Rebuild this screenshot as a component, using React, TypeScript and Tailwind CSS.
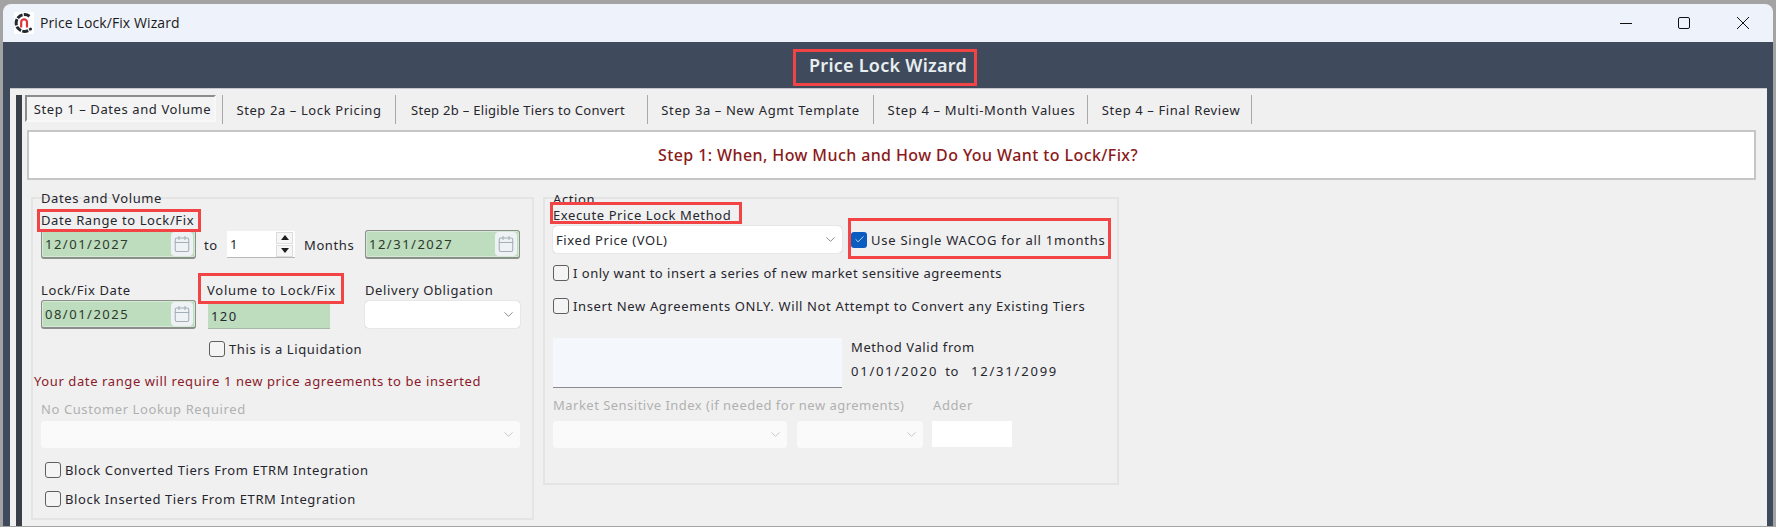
import React from "react";
import { Calendar, ChevronDown, Check } from "lucide-react";

const tabs = [
  { label: "Step 2a – Lock Pricing", cls: "w-[173px]" },
  { label: "Step 2b – Eligible Tiers to Convert", cls: "w-[252px] pr-[7px] tracking-[0.3px]" },
  { label: "Step 3a – New Agmt Template", cls: "w-[226px]" },
  { label: "Step 4 – Multi-Month Values", cls: "w-[214px] pl-[2px] tracking-[0.65px]" },
  { label: "Step 4 – Final Review", cls: "w-[164px] pl-[3px]" },
];

function Logo() {
  return (
    <svg width="20" height="22" viewBox="0 0 20 22" className="bg-white">
      <path d="M15.5 4.2A8.4 8.4 0 1 0 15.5 17.8" fill="none" stroke="#23272e" strokeWidth="3" strokeDasharray="6 1.2" />
      <path d="M7.2 15.5V10C7.2 6.6 13 6.6 13 10V15.5" fill="none" stroke="#e0303c" strokeWidth="2.2" />
      <circle cx="16.5" cy="17" r="1.5" fill="#23272e" />
    </svg>
  );
}

function DateBox({ value }: { value: string }) {
  return (
    <div className="flex h-[29px] w-[155px] items-center justify-between rounded-[3px] border border-[#8a8f8a] border-b-2 bg-[#bedcbe] pl-[3px] pr-[2px] tracking-[1.5px] text-[#2b3a2b] shadow-[inset_0_0_0_1px_#d6e8d6]">
      <span>{value}</span>
      <span className="flex h-[24px] w-[22px] items-center justify-center rounded-[4px] bg-[#eef2f4]">
        <Calendar size={18} strokeWidth={1.4} className="text-[#a3aeb6]" />
      </span>
    </div>
  );
}

function Select({ value, w, disabled }: { value?: string; w: string; disabled?: boolean }) {
  return (
    <div className={`flex h-[27px] items-center justify-between rounded-[4px] pl-[3px] pr-[4px] ${w} ${disabled ? "bg-[#fafafa] h-[26px]" : "bg-white shadow-[0_0_1px_#9a9a9a]"}`}>
      <span>{value}</span>
      <ChevronDown size={15} strokeWidth={1.2} className={disabled ? "text-[#b8b8b8]" : "text-[#666666]"} />
    </div>
  );
}

function SpinButton({ path }: { path: string }) {
  return (
    <span className="flex h-[12px] w-[17px] items-center justify-center border border-[#dcdcdc] bg-[#f6f6f6]">
      <svg width="8" height="5" viewBox="0 0 8 5">
        <path d={path} fill="#1c1c1c" />
      </svg>
    </span>
  );
}

function CheckBox({ label, className }: { label: string; className?: string }) {
  return (
    <div className={`flex h-[16px] items-center gap-[4px] ${className ?? ""}`}>
      <span className="h-[16px] w-[16px] shrink-0 rounded-[3px] border border-[#5f5f5f] bg-[#f4f4f4]" />
      <span>{label}</span>
    </div>
  );
}

function Annot({ cls }: { cls: string }) {
  return <div className={`pointer-events-none absolute border-[3px] border-[#f24444] ${cls}`} />;
}

export default function App() {
  return (
    <div className="relative flex h-[527px] w-[1776px] flex-col overflow-hidden bg-[#a3a3a3] pt-[4px] pb-px pl-[3px] pr-[3px] font-['Noto_Sans',sans-serif] text-[13px] leading-[18px] tracking-[0.6px] text-[#26262e]">
      <div className="flex h-[38px] shrink-0 items-center rounded-tl-[8px] rounded-tr-[8px] bg-[#eef2fb] pl-[11px]">
        <Logo />
        <span className="ml-[6px] font-['Open_Sans',sans-serif] text-[14px] tracking-[0.1px] text-[#1a1a1a]">Price Lock/Fix Wizard</span>
        <div className="ml-auto flex items-center pr-[24px] text-[#111111]">
          <svg width="12" height="12" viewBox="0 0 12 12"><path d="M0 6.5H12" stroke="currentColor" strokeWidth="1" /></svg>
          <svg width="12" height="12" viewBox="0 0 12 12" className="ml-[46px]"><rect x="0.5" y="0.5" width="11" height="11" rx="1.5" fill="none" stroke="currentColor" /></svg>
          <svg width="12" height="12" viewBox="0 0 12 12" className="ml-[47px]"><path d="M0 0L12 12M12 0L0 12" stroke="currentColor" strokeWidth="1" /></svg>
        </div>
      </div>

      <div className="flex min-h-0 flex-1 flex-col bg-[#3f4a5c]">
        <div className="flex h-[46px] shrink-0 items-center justify-center text-[18px] font-semibold tracking-[0.25px] text-[#e8eef0]">Price Lock Wizard</div>
        <div className="ml-[7px] mr-[6px] flex min-h-0 flex-1 border-t border-[#c4c8cc] bg-[#f0f0f0] pl-[6px]">
          <div className="mt-[6px] w-[6px] shrink-0 bg-[#3a3f47]" />
          <div className="min-w-0 flex-1">
            <div className="flex h-[41px] items-start pl-[3px] pt-[6px]">
              <div className="flex h-[27px] w-[191px] items-center justify-center border-2 border-[#8c8c8c] border-r-[#f8f8f8] border-b-[#f8f8f8] bg-[#f4f4f4] pl-[4px]">Step 1 – Dates and Volume</div>
              <div className="h-[29px] w-[7px] border-r border-[#a8a8a8]" />
              {tabs.map((t) => (
                <div key={t.label} className={`flex h-[29px] items-center justify-center border-r border-[#a8a8a8] ${t.cls}`}>{t.label}</div>
              ))}
            </div>
            <div className="ml-[5px] mr-[11px] flex h-[50px] items-center justify-center border-2 border-[#c6c6c6] bg-white pl-[13px] text-[16px] font-medium tracking-[0.4px] text-[#8b1a1a]">
              Step 1: When, How Much and How Do You Want to Lock/Fix?
            </div>

            <div className="flex items-start gap-[9px] pl-[9px] pt-[17px]">
              <div className="h-[323px] w-[503px] shrink-0 border-2 border-[#e4e4e4] pl-[8px]">
                <div className="-mt-[10px] h-[18px]">Dates and Volume</div>
                <div className="mt-[4px] h-[18px]">Date Range to Lock/Fix</div>
                <div className="mt-px flex h-[29px] items-center">
                  <DateBox value="12/01/2027" />
                  <span className="ml-[8px] w-[23px]">to</span>
                  <div className="flex h-[27px] w-[68px] items-center justify-between border-b border-[#b8b8b8] bg-white pl-[3px] pr-[2px]">
                    <span>1</span>
                    <span className="flex flex-col gap-px">
                      <SpinButton path="M4 0L8 5H0Z" />
                      <SpinButton path="M0 0H8L4 5Z" />
                    </span>
                  </div>
                  <span className="ml-[9px] w-[61px]">Months</span>
                  <DateBox value="12/31/2027" />
                </div>
                <div className="mt-[22px] flex h-[18px]">
                  <span className="w-[166px]">Lock/Fix Date</span>
                  <span className="w-[158px] tracking-[0.75px]">Volume to Lock/Fix</span>
                  <span>Delivery Obligation</span>
                </div>
                <div className="mt-px flex h-[29px] items-start">
                  <DateBox value="08/01/2025" />
                  <div className="ml-[12px] mt-[3px] flex h-[26px] w-[122px] items-center border-b border-[#a8b8a8] bg-[#bedcbe] pl-[3px] tracking-[1.4px]">120</div>
                  <div className="ml-[35px] mt-px">
                    <Select w="w-[155px]" />
                  </div>
                </div>
                <CheckBox label="This is a Liquidation" className="ml-[168px] mt-[12px]" />
                <div className="-ml-[7px] mt-[15px] h-[18px] text-[#8b1a2a]">Your date range will require 1 new price agreements to be inserted</div>
                <div className="mt-[10px] h-[18px] text-[#b0b0b0]">No Customer Lookup Required</div>
                <div className="mt-[3px]">
                  <Select w="w-[479px]" disabled />
                </div>
                <CheckBox label="Block Converted Tiers From ETRM Integration" className="ml-[4px] mt-[14px]" />
                <CheckBox label="Block Inserted Tiers From ETRM Integration" className="ml-[4px] mt-[13px]" />
              </div>

              <div className="h-[288px] w-[576px] shrink-0 border-2 border-[#e4e4e4] pl-[8px]">
                <div className="-mt-[9px] h-[16px]">Action</div>
                <div className="h-[18px]">Execute Price Lock Method</div>
                <div className="mt-[2px] flex h-[27px] items-center">
                  <Select value="Fixed Price (VOL)" w="w-[289px]" />
                  <div className="ml-[9px] flex items-center gap-[4px]">
                    <span className="flex h-[16px] w-[16px] items-center justify-center rounded-[3px] bg-[#0a5cc0]">
                      <Check size={11} strokeWidth={2} className="text-[#cfe0f5]" />
                    </span>
                    <span className="tracking-[0.75px]">Use Single WACOG for all 1months</span>
                  </div>
                </div>
                <CheckBox label="I only want to insert a series of new market sensitive agreements" className="mt-[12px] tracking-[0.5px]" />
                <CheckBox label="Insert New Agreements ONLY. Will Not Attempt to Convert any Existing Tiers" className="mt-[17px] tracking-[0.63px]" />
                <div className="mt-[24px] flex">
                  <div className="h-[50px] w-[289px] border-b border-[#8a8a8a] bg-[#f4f7fc]" />
                  <div className="ml-[9px]">
                    <div>Method Valid from</div>
                    <div className="mt-[6px] flex">
                      <span className="tracking-[1.8px]">01/01/2020</span>
                      <span className="ml-[7px]">to</span>
                      <span className="ml-[12px] tracking-[1.8px]">12/31/2099</span>
                    </div>
                  </div>
                </div>
                <div className="mt-[8px] flex h-[18px] text-[#b0b0b0]">
                  <span className="w-[380px] tracking-[0.48px]">Market Sensitive Index (if needed for new agrements)</span>
                  <span>Adder</span>
                </div>
                <div className="mt-[7px] flex">
                  <Select w="w-[234px]" disabled />
                  <div className="ml-[10px]">
                    <Select w="w-[126px]" disabled />
                  </div>
                  <div className="ml-[9px] h-[26px] w-[80px] bg-white" />
                </div>
              </div>
            </div>
          </div>
        </div>
      </div>

      <Annot cls="left-[793px] top-[49px] h-[37px] w-[184px]" />
      <Annot cls="left-[37px] top-[209px] h-[23px] w-[164px]" />
      <Annot cls="left-[198px] top-[273px] h-[31px] w-[146px]" />
      <Annot cls="left-[550px] top-[202px] h-[22px] w-[192px] border-t-[3px]" />
      <Annot cls="left-[848px] top-[218px] h-[41px] w-[263px]" />
    </div>
  );
}
